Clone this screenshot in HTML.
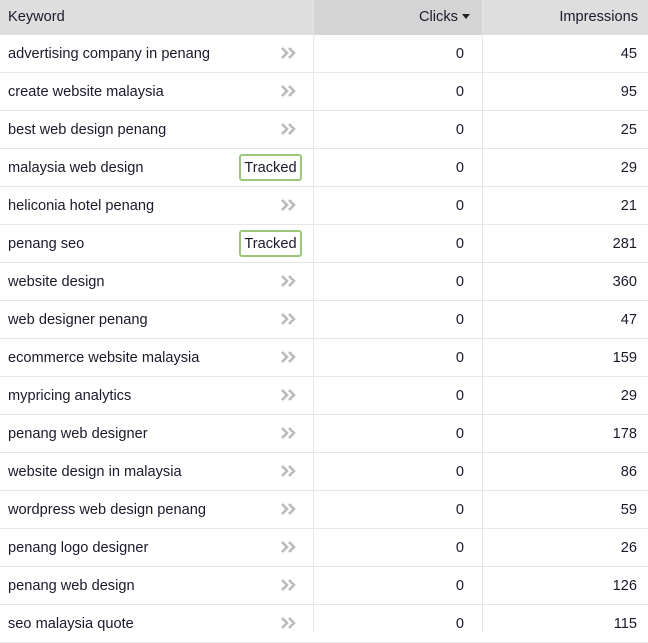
<html><head><style>
body{margin:0;width:648px;height:632px;overflow:hidden;background:#fff;font-family:"Liberation Sans",Arial,sans-serif;font-size:14.6px;color:#1a1a2a}
.hd{position:absolute;top:0;left:0;width:648px;height:35px;background:#dedede}
.hd div{position:absolute;top:0;height:35px;line-height:35px}
.r{position:absolute;left:0;width:648px;height:37px;border-bottom:1px solid #e6e6e6}
.r span{position:absolute;top:1px;line-height:37px}
.vl{position:absolute;top:0;width:1px;height:632px;background:#e6e6e6}
.ch{position:absolute;left:280px;top:11px}
.tr{position:absolute;left:239px;top:5px;width:59px;height:23px;border:2px solid #9ac77c;border-radius:3px;line-height:24px;text-align:center;font-size:14.6px}
</style></head><body>
<div class="hd">
<div style="left:8px">Keyword</div>
<div style="left:314px;width:168px;background:#d4d4d4;"><span style="position:absolute;right:12px">Clicks <svg width="8" height="5" style="vertical-align:2px"><path d="M0 0H8L4 5Z" fill="#222"/></svg></span></div>
<div style="left:483px;width:155px;text-align:right">Impressions</div>
</div>
<div class="vl" style="left:313px"></div><div class="vl" style="left:482px"></div>
<div id="rows"></div>
<script>
var d=[["advertising company in penang",45],["create website malaysia",95],["best web design penang",25],["malaysia web design",29,1],["heliconia hotel penang",21],["penang seo",281,1],["website design",360],["web designer penang",47],["ecommerce website malaysia",159],["mypricing analytics",29],["penang web designer",178],["website design in malaysia",86],["wordpress web design penang",59],["penang logo designer",26],["penang web design",126],["seo malaysia quote",115]];
var h="";d.forEach(function(x,i){h+='<div class="r" style="top:'+(35+38*i)+'px"><span style="left:8px">'+x[0]+'</span>'+(x[2]?'<div class="tr">Tracked</div>':'<svg class="ch" width="18" height="14"><path d="M2 2L7 7L2 12M9 2L14 7L9 12" fill="none" stroke="#bbb" stroke-width="2.6"/></svg>')+'<span style="right:184px">0</span><span style="right:11px">'+x[1]+'</span></div>'});
document.getElementById("rows").innerHTML=h;
</script>
</body></html>
